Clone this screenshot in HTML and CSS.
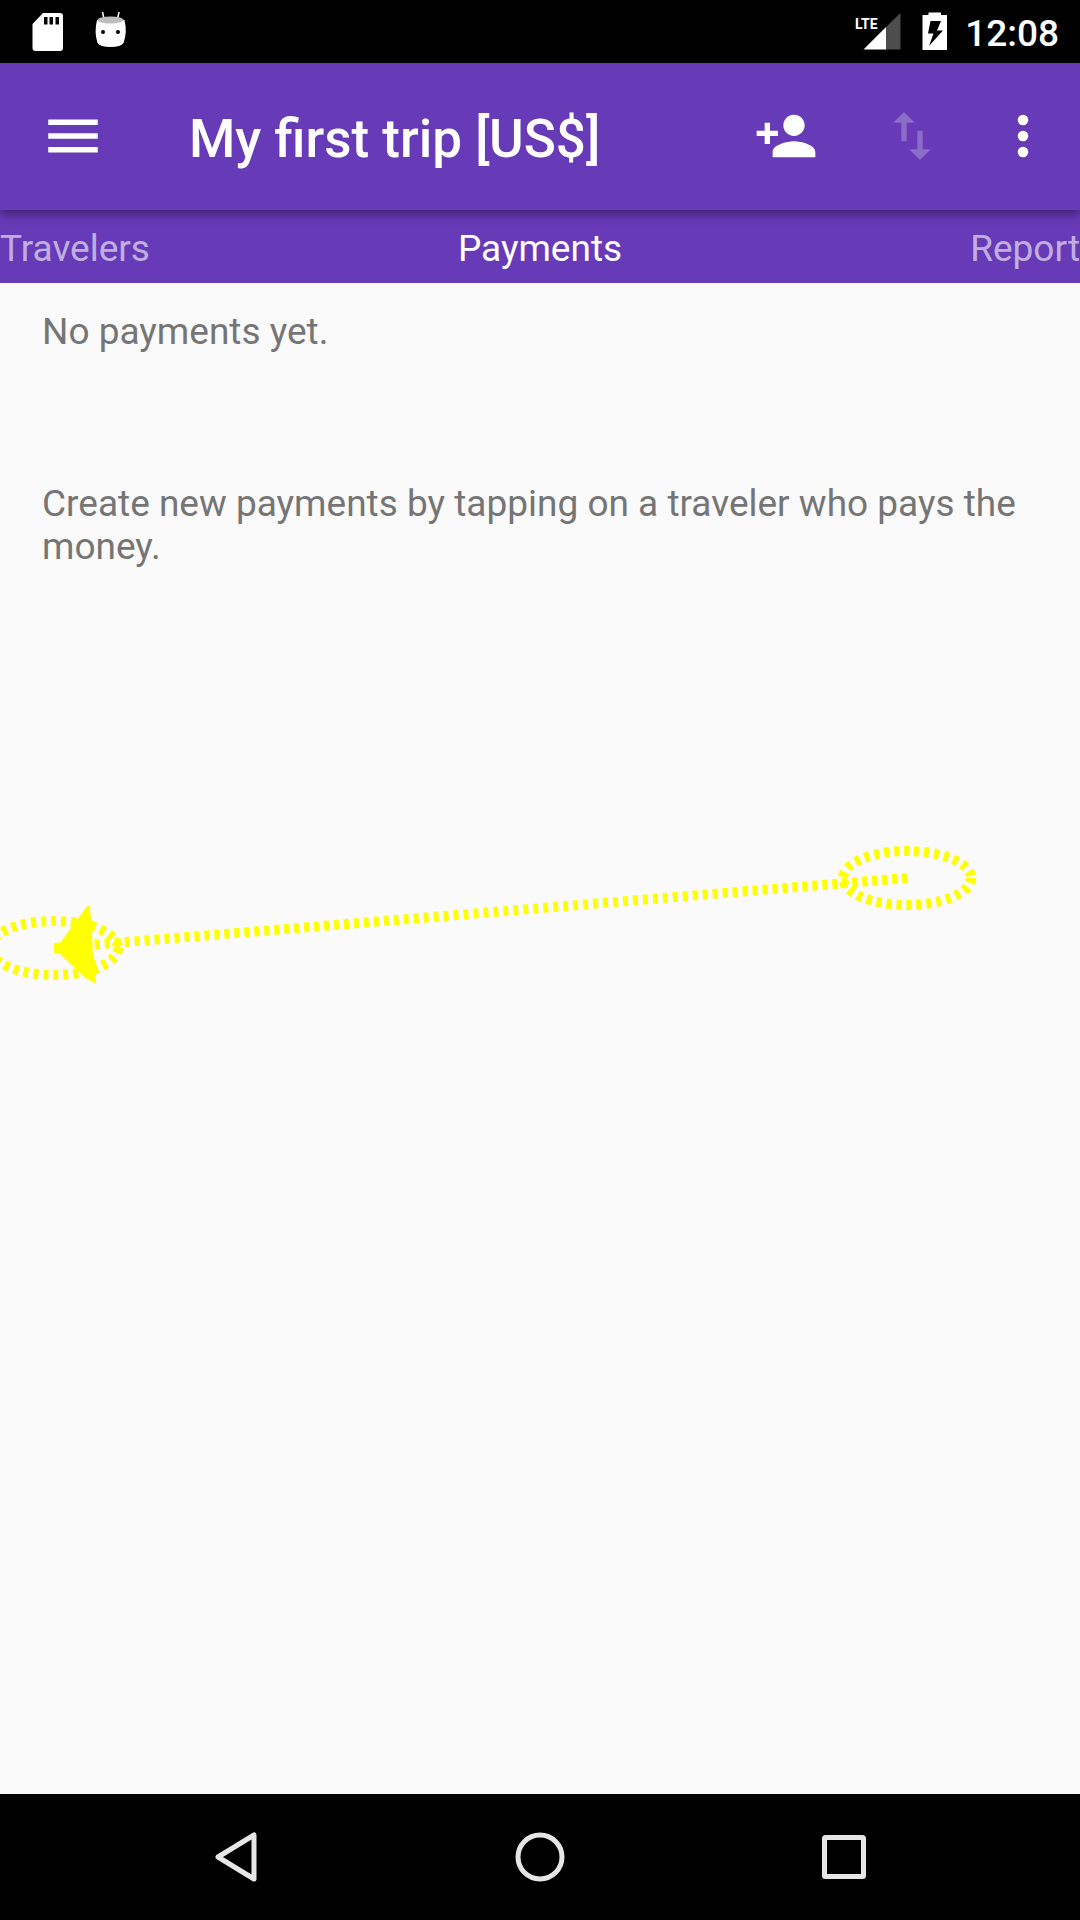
FILE: index.html
```html
<!DOCTYPE html>
<html lang="en">
<head>
<meta charset="utf-8">
<meta name="viewport" content="width=device-width, initial-scale=1">
<title>My first trip</title>
<link rel="stylesheet" href="styles.css">
</head>
<body>
<div class="screen">
  <div class="status">
    <svg class="status-left" width="96" height="40" viewBox="0 0 96 40" aria-hidden="true">
      <path fill="#fff" fill-rule="evenodd" d="M11 1H28Q31 1 31 4V36Q31 39 28 39H3.500Q.5 39 .5 36V12ZM12 5V12.500H15.500V5ZM17.500 5V12.500H21V5ZM23.500 5V12.500H27V5Z"/>
      <path stroke="#fff" stroke-width="1.500" stroke-linecap="round" d="M70.500 0L72 7M87 0L85.500 7"/>
      <path fill="#fff" d="M65 8Q62 20 65.500 31Q68 35 78.500 35Q89 35 91.500 31Q95.500 20 92.500 8Z"/>
      <ellipse fill="#bdbdbd" cx="78.500" cy="8" rx="13" ry="3.500"/>
      <circle cx="71" cy="20" r="2"/><circle cx="86" cy="20" r="2"/>
    </svg>
    <div class="status-right">
      <svg width="46" height="40" viewBox="0 0 46 40" role="img" aria-label="LTE signal">
        <text class="lte" x="0" y="17">LTE</text>
        <path fill="#4d4d4d" d="M31 15L45.500 1V37.500H31Z"/>
        <path fill="#fff" d="M8.500 37.500L31 15V37.500Z"/>
      </svg>
      <svg class="battery" width="26" height="40" viewBox="0 0 26 40" aria-hidden="true">
        <path fill="#fff" fill-rule="evenodd" d="M6.500 .5H19V3H25V38H.5V3H6.500ZM8.500 9L6 21.500H11.500L7 34L21 18.500H15L19 9Z"/>
      </svg>
      <time class="clock">12:08</time>
    </div>
  </div>

  <header class="toolbar">
    <button class="menu" aria-label="Open menu">
      <svg width="66" height="66" viewBox="0 0 24 24"><path d="M3 18h18v-2H3zm0-5h18v-2H3zm0-7v2h18V6z"/></svg>
    </button>
    <h1 class="title">My first trip [US$]</h1>
    <button class="action" aria-label="Add traveler">
      <svg width="64" height="64" viewBox="0 0 24 24"><path d="M15 12c2.210 0 4-1.790 4-4s-1.790-4-4-4-4 1.790-4 4 1.790 4 4 4zm-9-2V7H4v3H1v2h3v3h2v-3h3v-2H6zm9 4c-2.670 0-8 1.340-8 4v2h16v-2c0-2.660-5.330-4-8-4z"/></svg>
    </button>
    <button class="action" aria-label="Import or export" disabled>
      <svg width="64" height="64" viewBox="0 0 24 24"><path d="M9 3L5 6.990h3V14h2V6.990h3L9 3zm7 14.010V10h-2v7.010h-3L15 21l4-3.990h-3z"/></svg>
    </button>
    <button class="overflow" aria-label="More options">
      <svg width="64" height="64" viewBox="0 0 24 24"><circle cx="12" cy="6" r="2"/><circle cx="12" cy="12" r="2"/><circle cx="12" cy="18" r="2"/></svg>
    </button>
  </header>

  <nav class="tabs">
    <a class="tab" href="#travelers">Travelers</a>
    <a class="tab current" href="#payments" aria-current="page">Payments</a>
    <a class="tab" href="#report">Report</a>
  </nav>

  <main class="content">
    <p>No payments yet.</p>
    <p>Create new payments by tapping on a traveler who pays the money.</p>
    <svg class="gesture" width="980" height="90" viewBox="0 900 980 90" aria-hidden="true">
      <g fill="none" stroke="#ff0" stroke-width="10" stroke-dasharray="5 5">
        <ellipse cx="907" cy="878" rx="64" ry="27"/>
        <ellipse cx="54" cy="948" rx="64" ry="27"/>
        <path d="M907 878L54 948"/>
      </g>
      <path fill="#ff0" d="M54 943H60L88 905L90 907L91 920L95 922L92 930L93 958L96 961L95 968L99 970L95 975L96 984L84 977L59 953H54Z"/>
    </svg>
  </main>

  <nav class="system-nav" aria-label="System">
    <button aria-label="Back"><svg width="54" height="54" viewBox="0 0 54 54"><path d="M45 5V49L9 27Z"/></svg></button>
    <button aria-label="Home"><svg width="54" height="54" viewBox="0 0 54 54"><circle cx="27" cy="27" r="22"/></svg></button>
    <button aria-label="Recent apps"><svg width="54" height="54" viewBox="0 0 54 54"><rect x="7.500" y="7.500" width="39" height="39" rx="1"/></svg></button>
  </nav>
</div>
</body>
</html>
```
FILE: styles.css
```css
* {
  box-sizing: border-box;
}

body {
  margin: 0;
  font-family: Roboto, "Liberation Sans", sans-serif;
  font-size: 37px;
  line-height: 43px;
  background: #fafafa;
}

button {
  display: flex;
  align-items: center;
  justify-content: center;
  margin: 0;
  padding: 0;
  border: 0;
  background: none;
}

svg {
  display: block;
  flex: none;
}

.screen {
  display: flex;
  flex-direction: column;
  min-height: 100vh;
  overflow: hidden;
}

.status {
  display: flex;
  align-items: center;
  justify-content: space-between;
  height: 63px;
  padding: 0 21px 0 32px;
  background: #000;
  color: #fff;
}

.status-right {
  display: flex;
  align-items: center;
}

.lte {
  fill: #fff;
  font-family: "Liberation Sans Narrow", Roboto, sans-serif;
  font-size: 14px;
  font-weight: 700;
}

.battery {
  margin: 0 17px 0 21px;
}

.clock {
  padding-top: 3px;
  font-weight: 500;
}

.toolbar {
  position: relative;
  display: flex;
  align-items: center;
  height: 147px;
  padding: 0 9px 2px 0;
  background: #673ab7;
  box-shadow: 0 4px 10px rgba(0, 0, 0, 0.4);
}

.toolbar svg {
  fill: #fff;
}

.menu {
  width: 145px;
  height: 100%;
}

.title {
  flex: 1;
  margin: 0;
  padding: 6px 0 0 44px;
  color: #fff;
  font-size: 53px;
  font-weight: 500;
  line-height: 62px;
  white-space: nowrap;
}

.action {
  width: 126px;
  height: 100%;
}

.action:disabled {
  opacity: 0.25;
}

.overflow {
  width: 96px;
  height: 100%;
}

.tabs {
  display: grid;
  grid-template-columns: 1fr auto 1fr;
  align-items: center;
  height: 73px;
  padding-top: 4px;
  background: #673ab7;
}

.tab {
  color: rgba(255, 255, 255, 0.6);
  text-decoration: none;
}

.tab:last-child {
  text-align: right;
}

.tab.current {
  color: #fff;
}

.content {
  position: relative;
  flex: 1;
  display: flex;
  flex-direction: column;
  gap: 129px;
  padding: 27px 42px;
  color: #757575;
}

.content p {
  margin: 0;
}

/* Swipe trail drawn over the list */
.gesture {
  position: absolute;
  top: 617px;
  left: 0;
  overflow: visible;
}

.system-nav {
  display: flex;
  justify-content: center;
  gap: 178px;
  height: 126px;
  background: #000;
}

.system-nav button {
  width: 126px;
}

.system-nav svg {
  fill: none;
  stroke: #e6e6e6;
  stroke-width: 5;
  stroke-linejoin: round;
}
```
